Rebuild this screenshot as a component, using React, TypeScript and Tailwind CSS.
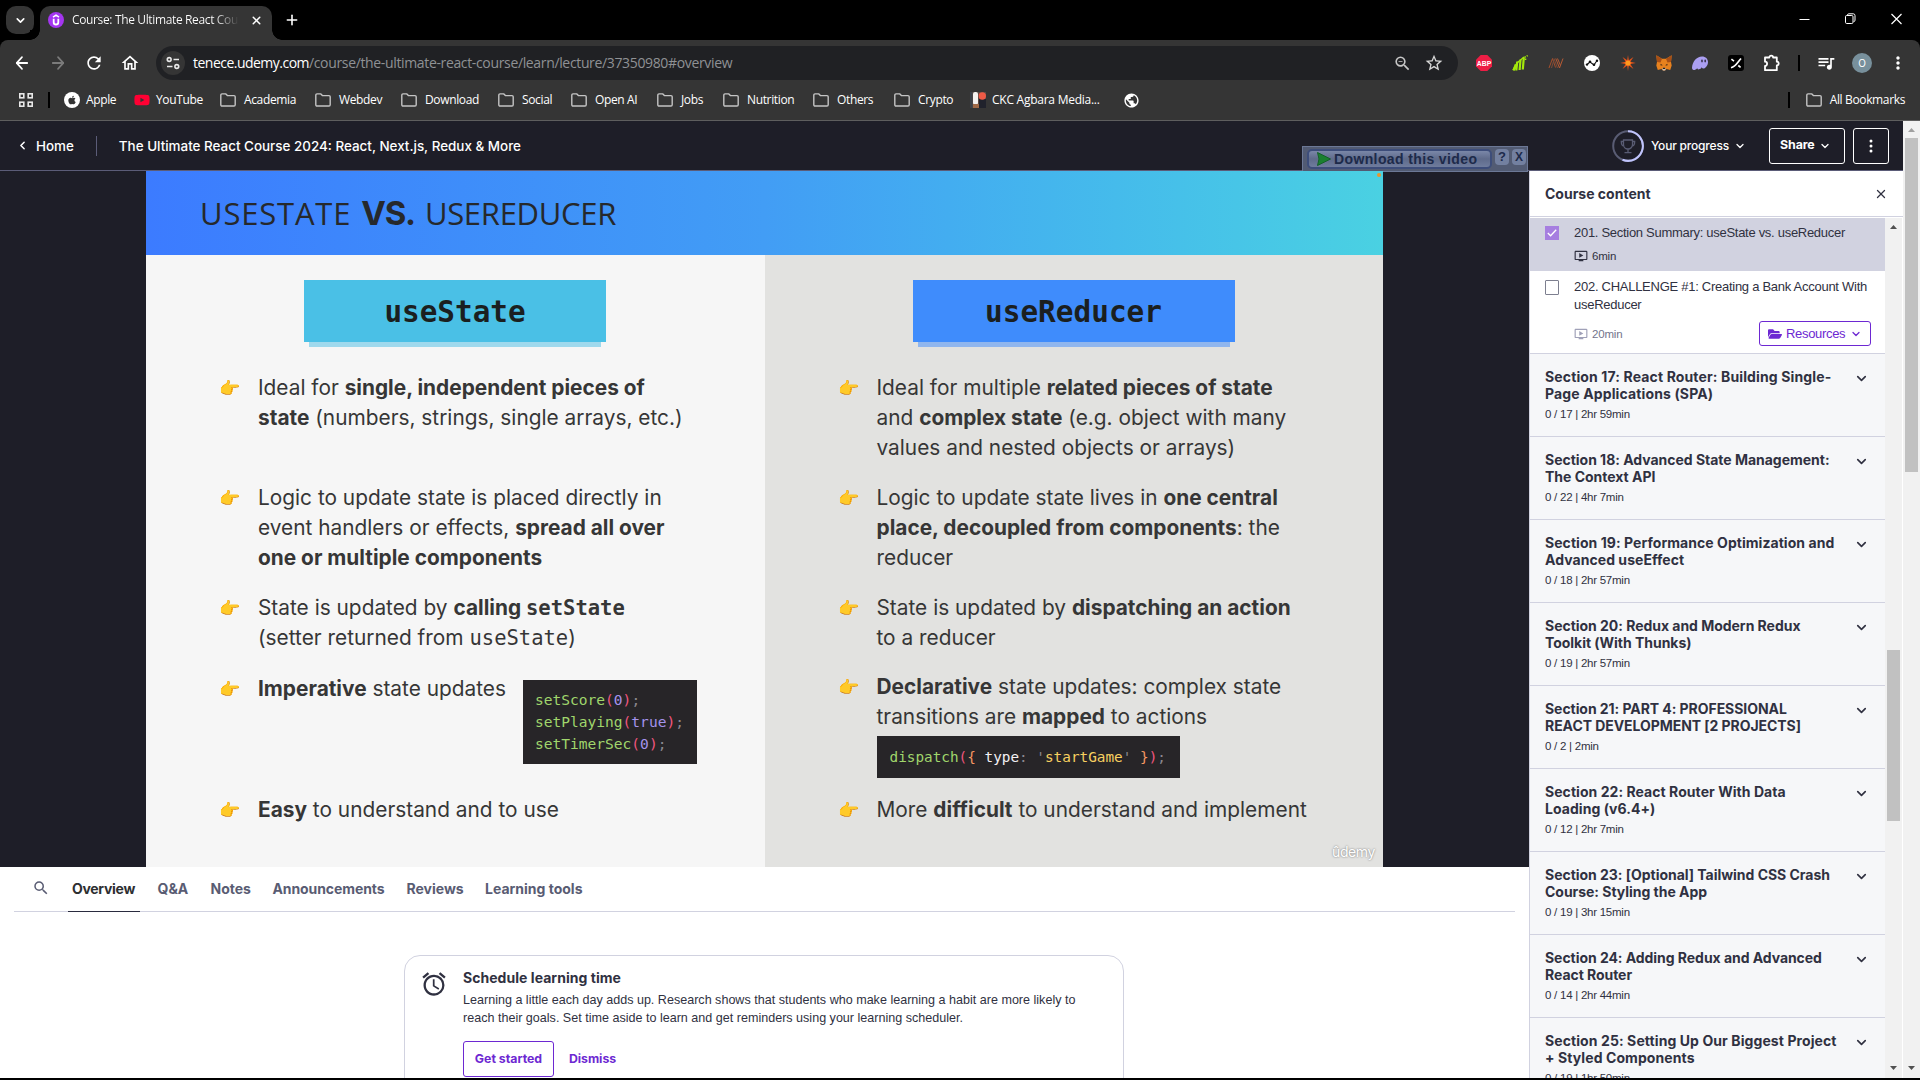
import React from 'react';
import { ArrowLeft, ArrowRight, ChevronDown, ChevronLeft, X, Plus } from 'lucide-react';
import {
  MdRefresh,
  MdOutlineHome,
  MdZoomOut,
  MdStarOutline,
  MdQueueMusic,
  MdMoreVert,
  MdPublic,
  MdSearch,
  MdAlarm,
  MdOndemandVideo,
} from 'react-icons/md';
import { FaApple, FaFolderOpen, FaYoutube } from 'react-icons/fa';

const B = ({ children }: { children: React.ReactNode }) => <b className="font-bold">{children}</b>;

/* ---------- Browser chrome ---------- */

function TabStrip() {
  return (
    <div className="flex h-10 shrink-0 items-start bg-black pt-1.5 pl-1.5 text-white">
      <div className="flex h-7 w-7 items-center justify-center rounded-[10px] bg-[#353535]">
        <ChevronDown size={13} strokeWidth={3} />
      </div>
      <div className="relative ml-1.5 flex h-[34px] w-[232px] items-center rounded-t-[10px] bg-[#353535] pb-1.5 pl-2">
        <div className="absolute bottom-0 -left-2.5 h-2.5 w-2.5 bg-[radial-gradient(circle_at_0_0,#000_9.5px,#353535_10px)]" />
        <div className="absolute -right-2.5 bottom-0 h-2.5 w-2.5 bg-[radial-gradient(circle_at_100%_0,#000_9.5px,#353535_10px)]" />
        <svg width="16" height="16" viewBox="0 0 16 16">
          <circle cx="8" cy="8" r="8" fill="#a435f0" />
          <path d="M5 5.2 8 3.2l3 2" fill="none" stroke="#fff" strokeWidth="1.5" />
          <path d="M5.7 6.8v3.4a2.3 2.3 0 0 0 4.6 0V6.8" fill="none" stroke="#fff" strokeWidth="1.8" />
        </svg>
        <div className="ml-2 w-[167px] overflow-hidden bg-[linear-gradient(90deg,#fff_85%,#353535)] bg-clip-text font-['Open_Sans'] text-[12px] tracking-[-0.36px] whitespace-nowrap text-transparent">
          Course: The Ultimate React Cou
        </div>
        <X size={13} strokeWidth={2.800} className="ml-[11px]" />
      </div>
      <Plus size={16} strokeWidth={2.400} className="mt-1.5 ml-[12px]" />
      <div className="mt-[7px] mr-[18px] ml-auto flex items-center gap-[35px]">
        <svg width="11" height="12" viewBox="0 0 11 12"><path d="M0.5 6.5h10" stroke="#fff" /></svg>
        <svg width="11" height="12" viewBox="0 0 11 12" fill="none" stroke="#fff">
          <rect x="0.5" y="2.5" width="7.5" height="8" rx="1.2" />
          <path d="M2.5 2.5V2a1.3 1.3 0 0 1 1.3-1.2H8.3A1.8 1.8 0 0 1 10 2.6v4.6A1.4 1.4 0 0 1 8.6 8.6" />
        </svg>
        <svg width="11" height="12" viewBox="0 0 11 12"><path d="M0.5 1 10.5 11M10.5 1 0.5 11" stroke="#fff" strokeWidth="1.2" /></svg>
      </div>
    </div>
  );
}

const extensionIcons: React.ReactNode[] = [
  <svg key="abp" width="16" height="16" viewBox="0 0 16 16">
    <path d="M4.7 0h6.6L16 4.7v6.6L11.3 16H4.7L0 11.3V4.7z" fill="#ed1e45" />
    <text x="8" y="10.8" textAnchor="middle" fontFamily="Liberation Sans" fontWeight="bold" fontSize="7.8" textLength="14.4" lengthAdjust="spacingAndGlyphs" fill="#fff">ABP</text>
  </svg>,
  <svg key="green" width="16" height="16" viewBox="0 0 16 16" stroke="#a3e80c" fill="none">
    <path d="M1.500 15.500 3.800 9.500M4.300 15.500l1-9M7.600 15 8.500 4.500M10.800 14.500l1-12" strokeWidth="2.200" />
    <path d="M1 15 5 8l3-2.500L12 2" strokeWidth="1.400" />
    <path d="M12.500 2.400 15.700.6M13.500 5V2.500" strokeWidth="1.600" strokeDasharray="1.500 1" />
  </svg>,
  <svg key="nn" width="16" height="16" viewBox="0 0 16 16" fill="none" strokeWidth="1">
    <path d="M1 13 4.500 3.500 7.500 12.500" stroke="#a34f2d" />
    <path d="M3.500 13 6 4.500M6 3.500 9.500 13" stroke="#7d4a37" />
    <path d="M7.800 3.500 11.500 13 15 3.500M9.500 3.500 12.500 10.500" stroke="#b55a34" />
  </svg>,
  <svg key="nodes" width="16" height="16" viewBox="0 0 16 16">
    <circle cx="8" cy="8" r="8" fill="#fff" />
    <path d="M3 9.500 6 7l4 3 3-4.500" fill="none" stroke="#111" strokeWidth="1.100" />
    <g fill="#111"><circle cx="3" cy="9.600" r="1.200" /><circle cx="6" cy="6.800" r="1.300" /><circle cx="10" cy="9.800" r="1.300" /><circle cx="13" cy="5.800" r="1.200" /></g>
  </svg>,
  <svg key="spark" width="16" height="16" viewBox="0 0 16 16">
    <path d="m8 0 .8 5.200L13.500 2l-3.200 4.800L15.800 8l-5.500 1 3.200 5-4.700-3.400L8 16l-.8-5.400L2.500 14l3.200-5L.2 8l5.500-1.200L2.500 2l4.700 3.200z" fill="#e8541a" />
    <circle cx="8" cy="8" r="2.600" fill="#ff9a1e" />
  </svg>,
  <svg key="fox" width="16" height="16" viewBox="0 0 16 16">
    <path d="M.3.3 6 3.800h4L15.700.3 15 7l.7 3.600-1.500 4.400-3.700-1-1.500 1.600H7L5.500 14l-3.700 1L.3 10.600 1 7z" fill="#e8821e" />
    <path d="M.3.3 6 3.800 4.500 7.500 1 7zM15.700.3 10 3.800 11.500 7.500 15 7z" fill="#a84f16" />
    <path d="m4.500 8.800 2.300 1.400-2.100.4zM11.500 8.800 9.200 10.200l2.100.4z" fill="#33231b" />
    <path d="M6.300 13h3.400l-.5 2.600H6.800z" fill="#c9c0ba" /><path d="M7 12.800h2l.3 1.200H6.700z" fill="#222" />
  </svg>,
  <svg key="ghost" width="16" height="16" viewBox="0 0 16 16">
    <path d="M0 12.800C.4 6.500 4.600 1.400 10 1.400c3.700 0 6 2.400 6 5.600 0 4-3 6.600-4.800 6.600-1.200 0-1.300-.9-1.200-1.500-.8 1.300-2 2.300-3.300 2.300-1.100 0-1.500-.8-1.400-1.500C4.300 14.200 3 15 1.700 15 .6 15 0 14 0 12.800z" fill="#ab9ff2" />
    <ellipse cx="10" cy="6" rx=".9" ry="1.400" fill="#3a3550" /><ellipse cx="13.200" cy="6" rx=".9" ry="1.400" fill="#3a3550" />
  </svg>,
  <svg key="slash" width="16" height="16" viewBox="0 0 16 16">
    <rect width="16" height="16" rx="3" fill="#000" />
    <path d="M3 12.800C8 11.500 9 8 13 3.500" stroke="#fff" strokeWidth="1.700" fill="none" />
    <path d="m3.400 4.200 2.600 2M10.300 10.500l2.300 1.800" stroke="#fff" strokeWidth="1.600" />
  </svg>,
];

function Toolbar() {
  return (
    <div className="bg-black">
      <div className="flex h-10 items-start rounded-t-lg bg-[#353535] pt-1.5 text-[#e8e8e8]">
        <div className="flex h-[34px] w-[156px] shrink-0 items-center gap-4 pl-3">
          <ArrowLeft size={20} strokeWidth={2.200} className="scale-x-90 text-white" />
          <ArrowRight size={20} strokeWidth={2.200} className="scale-x-90 text-[#7b7b7b]" />
          <MdRefresh size={20} className="text-white" />
          <MdOutlineHome size={20} className="text-white" />
        </div>
        <div className="flex h-[34px] w-[1302px] shrink-0 items-center rounded-full bg-[#202124] pl-[5px] font-['Open_Sans'] text-[14px]">
          <div className="flex h-6 w-6 items-center justify-center rounded-full bg-[#353535]">
            <svg width="14" height="14" viewBox="0 0 14 14" fill="none" stroke="#e8e8e8" strokeWidth="1.6">
              <circle cx="3.200" cy="3.500" r="1.900" /><path d="M7.500 3.500h5.500M1 10.500h5.500" /><circle cx="10.800" cy="10.500" r="1.900" />
            </svg>
          </div>
          <span className="-mt-px ml-2 tracking-[-0.52px] text-white">tenece.udemy.com</span>
          <span className="-mt-px tracking-[-0.35px] text-[#8f9194]">/course/the-ultimate-react-course/learn/lecture/37350980#overview</span>
          <MdZoomOut size={19} className="mr-3 ml-auto text-[#c7c7c7]" />
          <MdStarOutline size={20} className="mr-[14px] text-[#d6d6d6]" />
        </div>
        <div className="ml-[18px] flex h-[34px] items-center">
          {extensionIcons.map((icon, i) => (
            <div key={i} className="w-9">{icon}</div>
          ))}
          <svg width="18" height="18" viewBox="0 0 18 18" fill="none" stroke="#fff" strokeWidth="1.800" strokeLinejoin="round" className="-ml-px">
            <path d="M2 3.500h4.300a1.900 1.900 0 0 1 3.800 0h3.700v4.200a1.900 1.900 0 0 1 0 3.800v4.700H2v-4.300a2.100 2.100 0 0 0 0-4.200z" />
          </svg>
          <div className="ml-[17px] h-4 w-0.5 bg-black" />
          <MdQueueMusic size={20} className="ml-4 text-white" />
          <div className="ml-4 flex h-5 w-5 items-center justify-center rounded-full bg-[#78909c] font-['Inter'] text-[10px] text-white">O</div>
          <MdMoreVert size={20} className="ml-4 text-white" />
        </div>
      </div>
    </div>
  );
}

const Folder = () => (
  <svg width="16" height="14" viewBox="0 0 16 14" fill="none" stroke="#c4c4c4" strokeWidth="1.400">
    <path d="M.8 2.200c0-.8.500-1.300 1.200-1.300h3.800l1.600 1.700H14c.7 0 1.200.5 1.200 1.200v8c0 .7-.5 1.200-1.200 1.200H2c-.7 0-1.200-.5-1.200-1.200z" />
  </svg>
);

const bookmarks: { name: string; cls: string; icon?: React.ReactNode }[] = [
  {
    name: 'Apple',
    cls: 'w-[70px] gap-1.5',
    icon: <span className="flex h-4 w-4 items-center justify-center rounded-full bg-white text-[#333]"><FaApple size={10} /></span>,
  },
  { name: 'YouTube', cls: 'w-[86px] gap-1.5', icon: <FaYoutube size={16} className="text-[#ff0033]" /> },
  { name: 'Academia', cls: 'w-[95px] gap-2' },
  { name: 'Webdev', cls: 'w-[86px] gap-2' },
  { name: 'Download', cls: 'w-[97px] gap-2' },
  { name: 'Social', cls: 'w-[73px] gap-2' },
  { name: 'Open AI', cls: 'w-[86px] gap-2' },
  { name: 'Jobs', cls: 'w-[66px] gap-2' },
  { name: 'Nutrition', cls: 'w-[90px] gap-2' },
  { name: 'Others', cls: 'w-[81px] gap-2' },
  { name: 'Crypto', cls: 'w-[76px] gap-2' },
  {
    name: 'CKC Agbara Media...',
    cls: 'w-[154px] gap-1.5 tracking-[-0.25px]',
    icon: (
      <svg width="16" height="16" viewBox="0 0 16 16">
        <rect width="16" height="16" fill="#5b4a44" /><rect x="3" y="0" width="5" height="13" rx="2" fill="#f4f2f0" />
        <rect x="9" y="7" width="7" height="9" fill="#20222c" /><rect x="3" y="12" width="6" height="4" fill="#a06a48" />
        <rect x="0" y="0" width="2.500" height="16" fill="#3b4148" /><circle cx="12.300" cy="4" r="3.700" fill="#ee5a46" />
      </svg>
    ),
  },
];

function BookmarksBar() {
  return (
    <div className="flex h-[41px] shrink-0 items-center border-b border-[#5e5e5e] bg-[#353535] pl-[19px] font-['Open_Sans'] text-[12px] tracking-[-0.36px] text-white">
      <svg width="14" height="14" viewBox="0 0 14 14" fill="none" stroke="#e8e8e8" strokeWidth="1.600">
        <rect x=".8" y=".8" width="4" height="4" /><rect x="9.200" y=".8" width="4" height="4" />
        <rect x=".8" y="9.200" width="4" height="4" /><rect x="9.200" y="9.200" width="4" height="4" />
      </svg>
      <div className="mr-3.5 ml-[15px] h-4 w-0.5 bg-black" />
      {bookmarks.map((b) => (
        <div key={b.name} className={`flex shrink-0 items-center whitespace-nowrap ${b.cls}`}>
          {b.icon ?? <Folder />}
          <span>{b.name}</span>
        </div>
      ))}
      <MdPublic size={17} className="-ml-px text-white" />
      <div className="ml-auto h-4 w-0.5 bg-black" />
      <div className="mr-[15px] ml-4 flex items-center gap-2">
        <Folder />
        <span>All Bookmarks</span>
      </div>
    </div>
  );
}

/* ---------- Course header ---------- */

function CourseHeader() {
  return (
    <div className="relative flex h-[50px] shrink-0 items-center border-b border-[#5b5c78] bg-[#1e1e28] font-['Inter'] text-white">
      <ChevronLeft size={13} strokeWidth={2.800} className="ml-4" />
      <span className="mt-0.5 ml-[7px] text-[13.400px] font-medium">Home</span>
      <div className="ml-[22px] h-5 w-px bg-[#5b5c78]" />
      <span className="mt-0.5 ml-[22px] text-[13.430px] font-medium whitespace-nowrap">The Ultimate React Course 2024: React, Next.js, Redux &amp; More</span>
      <div className="mr-[14px] ml-auto flex items-center">
        <svg width="32" height="32" viewBox="0 0 32 32" fill="none">
          <circle cx="16" cy="16" r="14.800" stroke="#595c73" strokeWidth="2" />
          <path d="M16 1.200a14.800 14.800 0 1 1-5.500 28.500" stroke="#c0c4fc" strokeWidth="2" />
          <path d="M11.500 10h9v4.500a4.500 4.500 0 0 1-9 0zM11.500 11.500H9.300c0 3 .9 4.500 2.700 4.700M20.500 11.500h2.200c0 3-.9 4.500-2.700 4.700M16 19v3.500M12.500 22.700h7" stroke="#595c73" strokeWidth="1.300" />
        </svg>
        <span className="ml-[7px] w-[78px] text-[12px] font-medium tracking-[-0.2px] whitespace-nowrap">Your progress</span>
        <ChevronDown size={12} strokeWidth={2.600} className="ml-[5px]" />
        <div className="ml-[23px] flex h-9 w-[76px] items-center rounded-[3px] border border-white pl-2.5">
          <span className="text-[12.400px] font-bold tracking-[-0.1px]">Share</span>
          <ChevronDown size={12} strokeWidth={2.600} className="ml-1" />
        </div>
        <div className="ml-2 flex h-9 w-9 items-center justify-center rounded-[3px] border border-white">
          <svg width="4" height="14" viewBox="0 0 4 14" fill="#fff"><circle cx="2" cy="2" r="1.500" /><circle cx="2" cy="7" r="1.500" /><circle cx="2" cy="12" r="1.500" /></svg>
        </div>
      </div>
      {/* Downloader panel floating over the header and the video edge */}
      <div className="absolute top-[25px] left-[1302px] flex h-[26px] w-[226px] items-center gap-[3px] border border-[#6c7896] bg-[#525b73] pb-1 pl-1 font-['Liberation_Sans'] font-bold text-[#1d2a4a]">
        <div className="mt-1 flex h-5 w-[185px] items-center rounded-[5px] border-2 border-[#3d4d7a] bg-linear-to-b from-[#7a87a8] via-[#5f6b8b] to-[#6f7c9d] pl-2">
          <svg width="14" height="14" viewBox="0 0 14 14"><path d="M.5.500 13.500 7 .5 13.500 2 7z" fill="#1a8030" stroke="#14602a" /></svg>
          <span className="ml-[3px] text-[14px] tracking-[0.380px] whitespace-nowrap">Download this video</span>
        </div>
        <div className="flex h-4 w-3.5 items-center justify-center rounded-[4px] bg-[#7380a0] text-[13px]">?</div>
        <div className="flex h-4 w-3.5 items-center justify-center rounded-[4px] bg-[#7380a0] text-[12px]">X</div>
      </div>
    </div>
  );
}

/* ---------- Slide ---------- */

function Point({ cls, children }: { cls: string; children: React.ReactNode }) {
  return (
    <div className={`flex shrink-0 ${cls}`}>
      <span className="w-[39px] shrink-0 text-[17px] leading-[30px]">👉</span>
      <div className="whitespace-nowrap">{children}</div>
    </div>
  );
}

const Fn = ({ children }: { children: React.ReactNode }) => <span className="text-[#a0d66c]">{children}</span>;
const Par = ({ children }: { children: React.ReactNode }) => <span className="text-[#f0567f]">{children}</span>;
const Val = ({ children }: { children: React.ReactNode }) => <span className="text-[#a493ec]">{children}</span>;
const Dim = ({ children }: { children: React.ReactNode }) => <span className="text-[#8b888f]">{children}</span>;

function Slide() {
  return (
    <div className="flex h-[696px] w-[1237px] flex-col font-['Inter'] text-[20.850px] leading-[30.200px] text-[#363636]">
      <div className="relative flex h-[84px] shrink-0 items-center bg-linear-to-r from-[#3c7bff] via-[#429df5] to-[#4ad1e2] pl-[54px] font-['Open_Sans'] text-[31px] font-medium text-[#26292c]">
        <span className="tracking-[0.800px]">USESTATE</span>
        <span className="ml-[10px] font-['Inter'] text-[33px] font-bold tracking-[-1.200px]">VS.</span>
        <span className="ml-[10px] tracking-[-0.300px]">USEREDUCER</span>
        <div className="absolute top-0.5 right-0.5 h-1 w-1 rounded-full bg-[#e8962e]" />
      </div>
      <div className="flex min-h-0 flex-1">
        <div className="flex w-[618.500px] flex-col bg-[#f6f6f6] pt-[25px]">
          <div className="ml-[158px] flex h-[62px] w-[302px] shrink-0 items-center justify-center bg-[#4ac0e6] pt-[3px] font-['DejaVu_Sans_Mono'] text-[29.300px] font-bold text-[#1b1f20]">useState</div>
          <div className="ml-[163px] h-[5px] w-[292px] shrink-0 bg-[#9fd9ed]" />
          <div className="pt-[26px] pl-[73px]">
            <Point cls="h-[110px]">Ideal for <B>single, independent pieces of</B><br /><B>state</B> (numbers, strings, single arrays, etc.)</Point>
            <Point cls="h-[110px]">Logic to update state is placed directly in<br />event handlers or effects, <B>spread all over</B><br /><B>one or multiple components</B></Point>
            <Point cls="h-[81px]">
              State is updated by <B>calling <span className="font-['DejaVu_Sans_Mono'] text-[20.500px] leading-none">setState</span></B><br />
              (setter returned from <span className="font-['DejaVu_Sans_Mono'] text-[20.500px] leading-none">useState</span>)
            </Point>
            <div className="flex h-[121px]">
              <Point cls="w-[304px]"><B>Imperative</B> state updates</Point>
              <div className="mt-[6px] h-[84px] w-[174px] bg-[#272528] pt-[9px] pl-3 font-['DejaVu_Sans_Mono'] text-[14.550px] leading-[22.200px]">
                <div><Fn>setScore</Fn><Par>(</Par><Val>0</Val><Par>)</Par><Dim>;</Dim></div>
                <div><Fn>setPlaying</Fn><Par>(</Par><Val>true</Val><Par>)</Par><Dim>;</Dim></div>
                <div><Fn>setTimerSec</Fn><Par>(</Par><Val>0</Val><Par>)</Par><Dim>;</Dim></div>
              </div>
            </div>
            <Point cls=""><B>Easy</B> to understand and to use</Point>
          </div>
        </div>
        <div className="flex flex-1 flex-col bg-[#e2e2e0] pt-[25px]">
          <div className="ml-[148px] flex h-[62px] w-[322px] shrink-0 items-center justify-center bg-[#3f8cfc] pt-[3px] font-['DejaVu_Sans_Mono'] text-[29.400px] font-bold text-[#1b1f20]">useReducer</div>
          <div className="ml-[153px] h-[5px] w-[312px] shrink-0 bg-[#90b6ee]" />
          <div className="pt-[26px] pl-[73px]">
            <Point cls="h-[110px]">Ideal for multiple <B>related pieces of state</B><br />and <B>complex state</B> (e.g. object with many<br />values and nested objects or arrays)</Point>
            <Point cls="h-[110px]">Logic to update state lives in <B>one central</B><br /><B>place, decoupled from components</B>: the<br />reducer</Point>
            <Point cls="h-[79px]">State is updated by <B>dispatching an action</B><br />to a reducer</Point>
            <Point cls="h-[123px]">
              <B>Declarative</B> state updates: complex state<br />transitions are <B>mapped</B> to actions
              <div className="mt-[4px] flex h-[42px] w-[303px] items-center bg-[#272528] pl-[13px] font-['DejaVu_Sans_Mono'] text-[14.350px] whitespace-pre">
                <Fn>dispatch</Fn><Par>(</Par><span className="text-[#f59762]">{'{ '}</span><span className="text-[#f3f0f3]">type</span><Dim>{": '"}</Dim><span className="text-[#f7d060]">startGame</span><Dim>{"' "}</Dim><span className="text-[#f59762]">{'}'}</span><Par>)</Par><Dim>;</Dim>
              </div>
            </Point>
            <Point cls="">More <B>difficult</B> to understand and implement</Point>
          </div>
          <div className="mt-auto mr-2 mb-[5px] text-right text-[14px] leading-5 tracking-[-0.400px] text-white [text-shadow:0_0_2px_#666]">ûdemy</div>
        </div>
      </div>
    </div>
  );
}

/* ---------- Below the player ---------- */

const tabs = [
  { name: 'Overview', cls: 'w-[85.500px] text-[#2d2f31] tracking-[-0.300px]' },
  { name: 'Q&A', cls: 'w-[53px] text-[#595c73]' },
  { name: 'Notes', cls: 'w-[62px] text-[#595c73]' },
  { name: 'Announcements', cls: 'w-[134px] text-[#595c73] tracking-[-0.090px]' },
  { name: 'Reviews', cls: 'w-[78.500px] text-[#595c73]' },
  { name: 'Learning tools', cls: 'text-[#595c73]' },
];

function CourseTabs() {
  return (
    <div className="flex min-h-0 flex-1 flex-col overflow-hidden bg-white font-['Inter'] text-[#303141]">
      <div className="relative mx-3.5 flex h-[45px] shrink-0 items-center border-b border-[#d1d2e0] pb-0.5 pl-[18px]">
        <MdSearch size={18} className="mr-[22px] text-[#595c73]" />
        {tabs.map((t) => (
          <div key={t.name} className={`text-[14px] font-bold whitespace-nowrap ${t.cls}`}>{t.name}</div>
        ))}
        <div className="absolute -bottom-px left-[54px] h-px w-[72px] bg-[#2a2b3f]" />
      </div>
      <div className="mt-[43px] ml-[404px] flex h-[180px] w-[720px] shrink-0 rounded-2xl border border-[#d1d2e0] pt-3 pl-[15px]">
        <MdAlarm size={28} className="mt-0.5 shrink-0" />
        <div className="ml-[15px]">
          <div className="text-[14px] leading-5 font-bold tracking-[0.040px]">Schedule learning time</div>
          <p className="pt-[3px] font-['Liberation_Sans'] text-[12.570px] leading-[18px] whitespace-nowrap">
            Learning a little each day adds up. Research shows that students who make learning a habit are more likely to<br />
            reach their goals. Set time aside to learn and get reminders using your learning scheduler.
          </p>
          <div className="mt-[14px] flex items-center text-[12.300px] font-bold text-[#6d28d2]">
            <div className="flex h-9 w-[91px] items-center justify-center rounded-[3px] border border-[#6d28d2]">Get started</div>
            <span className="ml-[15px] tracking-[-0.050px]">Dismiss</span>
          </div>
        </div>
      </div>
    </div>
  );
}

/* ---------- Sidebar ---------- */

const sections = [
  { lines: ['Section 17: React Router: Building Single-', 'Page Applications (SPA)'], sub: '0 / 17 | 2hr 59min', cls: 'tracking-[0.130px]' },
  { lines: ['Section 18: Advanced State Management:', 'The Context API'], sub: '0 / 22 | 4hr 7min', cls: 'tracking-[-0.020px]' },
  { lines: ['Section 19: Performance Optimization and', 'Advanced useEffect'], sub: '0 / 18 | 2hr 57min', cls: 'tracking-[0.050px]' },
  { lines: ['Section 20: Redux and Modern Redux', 'Toolkit (With Thunks)'], sub: '0 / 19 | 2hr 57min', cls: 'tracking-[-0.030px]' },
  { lines: ['Section 21: PART 4: PROFESSIONAL', 'REACT DEVELOPMENT [2 PROJECTS]'], sub: '0 / 2 | 2min', cls: 'tracking-[-0.060px]' },
  { lines: ['Section 22: React Router With Data', 'Loading (v6.4+)'], sub: '0 / 12 | 2hr 7min', cls: 'tracking-[0.050px]' },
  { lines: ['Section 23: [Optional] Tailwind CSS Crash', 'Course: Styling the App'], sub: '0 / 19 | 3hr 15min', cls: 'tracking-[-0.030px]' },
  { lines: ['Section 24: Adding Redux and Advanced', 'React Router'], sub: '0 / 14 | 2hr 44min', cls: 'tracking-[-0.050px]' },
  { lines: ['Section 25: Setting Up Our Biggest Project', '+ Styled Components'], sub: '0 / 19 | 1hr 50min', cls: 'tracking-[0.090px]' },
];

const Arrow = ({ up, color }: { up?: boolean; color: string }) => (
  <svg width="7" height="4" viewBox="0 0 7 4" className="shrink-0"><path d={up ? 'M0 4 3.500 0 7 4z' : 'M0 0 3.500 4 7 0z'} fill={color} /></svg>
);

function Sidebar() {
  return (
    <div className="flex h-full w-[374px] shrink-0 flex-col border-l border-[#d1d2e0] bg-white font-['Inter'] text-[#303141]">
      <div className="flex h-[46px] shrink-0 items-center justify-between border-b border-[#d1d2e0] pr-[15px] pl-[15px]">
        <span className="-mt-px text-[14px] font-bold">Course content</span>
        <X size={14} strokeWidth={2.200} />
      </div>
      <div className="flex min-h-0 flex-1 pt-px">
        <div className="flex min-w-0 flex-1 flex-col overflow-hidden font-['Liberation_Sans'] text-[13px]">
          <div className="flex h-[53px] shrink-0 bg-[#d1d2e0] pt-[6px] pl-[15px]">
            <div className="mt-[2px] flex h-3.5 w-3.5 items-center justify-center bg-[#a67ee0]">
              <svg width="10" height="8" viewBox="0 0 10 8"><path d="m.8 4 2.800 2.800L9.200.8" fill="none" stroke="#fff" strokeWidth="1.300" /></svg>
            </div>
            <div className="ml-[15px] leading-[18px] whitespace-nowrap">
              <div className="tracking-[-0.290px]">201. Section Summary: useState vs. useReducer</div>
              <div className="mt-[5px] flex items-center gap-1 text-[11.500px] tracking-[-0.200px]"><MdOndemandVideo size={14} />6min</div>
            </div>
          </div>
          <div className="flex h-[82px] shrink-0 pt-[7px] pl-[15px]">
            <div className="mt-[2px] h-[15px] w-3.5 shrink-0 rounded-[1px] border border-[#7d7f8f]" />
            <div className="ml-[15px] w-[297px] leading-[18px] whitespace-nowrap">
              <div className="tracking-[-0.270px]">202. CHALLENGE #1: Creating a Bank Account With<br />useReducer</div>
              <div className="mt-[7px] flex items-center gap-1 text-[11.500px] tracking-[-0.200px] text-[#73758c]">
                <MdOndemandVideo size={14} className="text-[#a0a1b8]" />20min
                <div className="ml-auto flex h-[25px] w-28 items-center rounded-[3px] border border-[#6d28d2] pl-2 text-[13px] tracking-[-0.320px] text-[#6d28d2]">
                  <FaFolderOpen size={14} />
                  <span className="ml-1 w-[60px]">Resources</span>
                  <ChevronDown size={12} strokeWidth={2.500} className="ml-[4px]" />
                </div>
              </div>
            </div>
          </div>
          {sections.map((s) => (
            <div key={s.sub + s.lines[0]} className="flex h-[83px] shrink-0 justify-between border-t border-[#d1d2e0] bg-[#f6f7f9] pt-3.5 pr-4 pl-[15px] whitespace-nowrap">
              <div>
                <div className={`font-['Inter'] text-[14px] leading-[17px] font-bold ${s.cls}`}>{s.lines[0]}<br />{s.lines[1]}</div>
                <div className="mt-1 text-[11.500px] leading-4 tracking-[-0.250px]">{s.sub}</div>
              </div>
              <ChevronDown size={15} strokeWidth={2.600} className="mt-[3px] shrink-0" />
            </div>
          ))}
        </div>
        <div className="flex w-[17px] flex-col items-center bg-[#f1f1f1] pt-[7px] pb-2">
          <Arrow up color="#505050" />
          <div className="mt-[421px] h-[171px] w-[13px] bg-[#c1c1c1]" />
          <div className="mt-auto"><Arrow color="#505050" /></div>
        </div>
        <div className="w-px bg-white" />
      </div>
    </div>
  );
}

export default function App() {
  return (
    <div className="flex h-[1080px] w-[1920px] flex-col overflow-hidden bg-black pb-0.5">
      <TabStrip />
      <Toolbar />
      <BookmarksBar />
      <div className="flex min-h-0 flex-1">
        <div className="flex w-[1903px] shrink-0 flex-col">
          <CourseHeader />
          <div className="flex min-h-0 flex-1">
            <div className="flex w-[1529px] shrink-0 flex-col">
              <div className="flex h-[696px] shrink-0 bg-[#1e1e28] pl-[146px]">
                <Slide />
              </div>
              <CourseTabs />
            </div>
            <Sidebar />
          </div>
        </div>
        <div className="flex w-[17px] flex-col items-center bg-[#f1f1f1] pt-[7px] pb-2">
          <Arrow up color="#a0a0a0" />
          <div className="mt-1.5 h-[334px] w-[13px] bg-[#c1c1c1]" />
          <div className="mt-auto"><Arrow color="#505050" /></div>
        </div>
      </div>
    </div>
  );
}
